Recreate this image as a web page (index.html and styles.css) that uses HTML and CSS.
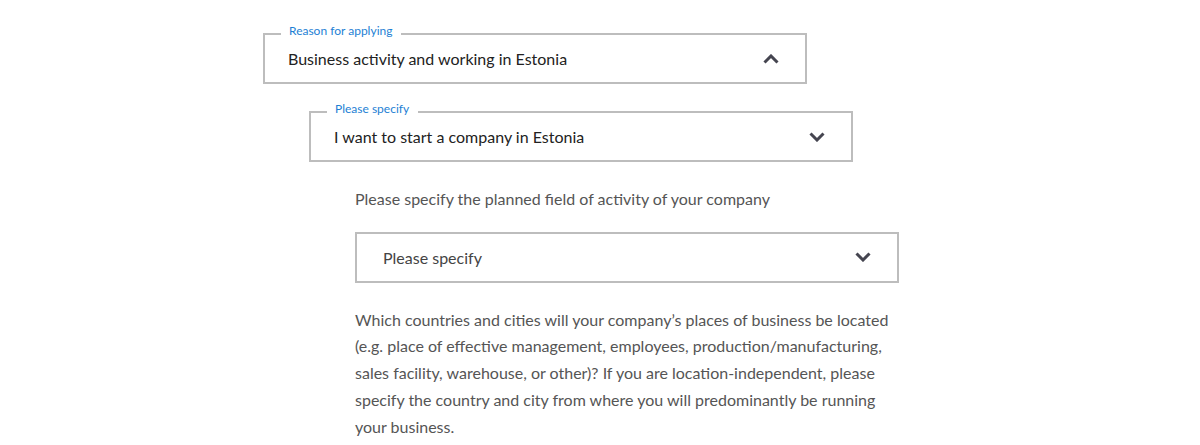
FILE: index.html
```html
<!DOCTYPE html>
<html>
<head>
<title>Reason for applying</title>
<link rel="stylesheet" href="styles.css">
</head>
<body>
<div id="applyForm">
	<div class="select">
		<span class="select-label">Reason for applying</span>
		<span class="select-value">Business activity and working in Estonia</span>
		<svg class="chevron" width="16" height="10" viewBox="0 0 16 10"><polyline points="1.5,8.5 8,2 14.5,8.5" /></svg>
	</div>
	<div class="nested">
		<div class="select">
			<span class="select-label">Please specify</span>
			<span class="select-value">I want to start a company in Estonia</span>
			<svg class="chevron" width="16" height="10" viewBox="0 0 16 10"><polyline points="1.5,1.5 8,8 14.5,1.5" /></svg>
		</div>
		<div class="nested">
			<p class="question">Please specify the planned field of activity of your company</p>
			<div class="select plain">
				<span class="select-value placeholder">Please specify</span>
				<svg class="chevron" width="16" height="10" viewBox="0 0 16 10"><polyline points="1.5,1.5 8,8 14.5,1.5" /></svg>
			</div>
			<p class="question long">Which countries and cities will your company’s places of business be located (e.g. place of effective management, employees, production/manufacturing, sales facility, warehouse, or other)? If you are location-independent, please specify the country and city from where you will predominantly be running your business.</p>
		</div>
	</div>
</div>
</body>
</html>
```

FILE: styles.css
```css
body {
	margin: 0;
	background-color: #fff;
	font-family: Lato, "Liberation Sans", sans-serif;
}
#applyForm {
	padding: 33px 0 0 263px;
	width: 544px;
}
.nested {
	margin-left: 46px;
}
.select {
	position: relative;
	box-sizing: border-box;
	width: 544px;
	height: 51px;
	border: 2px solid #bdbdbd;
	display: flex;
	align-items: center;
	justify-content: space-between;
	padding: 0 26px 0 23px;
	margin-bottom: 27px;
	color: #222;
	font-size: 16px;
}
.nested .select {
	margin-bottom: 24px;
}
.nested .select.plain {
	padding-left: 26px;
	margin-bottom: 24px;
}
.select-label {
	position: absolute;
	top: -12px;
	left: 16px;
	padding: 0 9px 0 8px;
	background-color: #fff;
	color: #1e7fd4;
	font-size: 12px;
	line-height: 16px;
}
.placeholder {
	color: #444;
}
.chevron polyline {
	fill: none;
	stroke: #454550;
	stroke-width: 3;
}
.question {
	margin: 0 0 19px 0;
	color: #555;
	font-size: 16px;
	line-height: 26.7px;
}
.question.long {
	width: 540px;
}
```
